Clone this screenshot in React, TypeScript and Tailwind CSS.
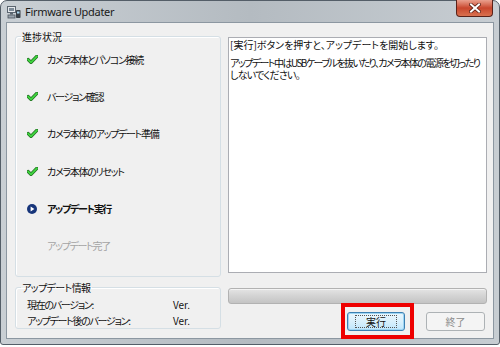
import React from 'react';

// 手順の状態
type StepStatus = 'done' | 'current' | 'pending';

const STEPS: { label: string; status: StepStatus }[] = [
  { label: 'カメラ本体とパソコン接続', status: 'done' },
  { label: 'バージョン確認', status: 'done' },
  { label: 'カメラ本体のアップデート準備', status: 'done' },
  { label: 'カメラ本体のリセット', status: 'done' },
  { label: 'アップデート実行', status: 'current' },
  { label: 'アップデート完了', status: 'pending' },
];

const jp = "font-['Noto_Sans_CJK_JP',sans-serif] [font-feature-settings:'palt']";

const CheckIcon = () => (
  <svg width="11" height="9" viewBox="0 0 11 9">
    <path d="M1.2 4.6 L4 7.4 L9.8 1.4" fill="none" stroke="#1f6b1f" strokeWidth="3.4" strokeLinecap="round" strokeLinejoin="round" />
    <path d="M1.2 4.6 L4 7.4 L9.8 1.4" fill="none" stroke="#3fd43f" strokeWidth="2" strokeLinecap="round" strokeLinejoin="round" />
  </svg>
);

const PlayIcon = () => (
  <svg width="10" height="10" viewBox="0 0 10 10">
    <circle cx="5" cy="5" r="5" fill="#17357a" />
    <path d="M3.6 2.6 L7.4 5 L3.6 7.4 Z" fill="#ffffff" />
  </svg>
);

const AppIcon = () => (
  <svg width="14" height="14" viewBox="0 0 14 14">
    <rect x="0.5" y="1.5" width="8" height="6" fill="#e6e9ec" stroke="#5b6570" />
    <rect x="2" y="3" width="5" height="3" fill="#7d8b98" />
    <rect x="3" y="8" width="3" height="1.5" fill="#5b6570" />
    <rect x="1" y="10" width="7" height="3" fill="#9aa4ae" stroke="#4b545d" strokeWidth="0.8" />
    <rect x="9" y="5" width="4.5" height="8" rx="0.8" fill="#3a4149" />
    <rect x="10" y="6.5" width="2.5" height="2" fill="#a9d6ef" />
  </svg>
);

const CloseGlyph = () => (
  <svg width="12" height="10" viewBox="0 0 12 10">
    <path d="M2 1.5 L10 8.5 M10 1.5 L2 8.5" stroke="#5a1e14" strokeWidth="3.6" strokeLinecap="square" />
    <path d="M2 1.5 L10 8.5 M10 1.5 L2 8.5" stroke="#ffffff" strokeWidth="2" strokeLinecap="square" />
  </svg>
);

export default function App() {
  return (
    <div className="w-[500px] h-[347px] bg-white">
      {/* ウィンドウ枠 */}
      <div className="w-[500px] h-[345px] flex flex-col rounded-t-[7px] rounded-b-[3px] border border-[#545e68] bg-gradient-to-r from-[#c9cfd4] via-[#b4bbc1] to-[#c7cdd2] px-[5px] pb-[5px]">
        {/* タイトルバー */}
        <div className="h-[21px] flex items-center relative">
          <div className="ml-[1px] mr-[4px] flex items-center">
            <AppIcon />
          </div>
          <span className="font-['Noto_Sans',sans-serif] text-[11px] tracking-[-0.3px] text-[#1a1a1a] leading-none">Firmware Updater</span>
          <div className="absolute right-[1px] -top-[1px] w-[37px] h-[17px] flex items-center justify-center rounded-b-[4px] border border-[#5a2219] border-t-0 bg-gradient-to-b from-[#e9a08e] via-[#c8462d] to-[#d9714f]">
            <CloseGlyph />
          </div>
        </div>

        {/* クライアント領域 */}
        <div className={`flex-1 flex border border-[#8c97a1] bg-[#f0f0f0] pl-[8px] pr-[6px] text-[10px] leading-[13px] text-[#111] ${jp}`}>
          {/* 左カラム */}
          <div className="w-[206px] shrink-0 flex flex-col pt-[7px]">
            <fieldset className="h-[247px] border border-[#d5dfe5] rounded-[3px] shadow-[inset_1px_1px_0_#fff]">
              <legend className="ml-[5px] px-[1px]">進捗状況</legend>
              <div className="flex flex-col gap-[24.4px] pt-[9.5px]">
                {STEPS.map((s) => (
                  <div key={s.label} className="h-[13px] flex items-center">
                    <div className="w-[31px] pl-[11px] flex items-center">
                      {s.status === 'done' && <CheckIcon />}
                      {s.status === 'current' && <PlayIcon />}
                    </div>
                    <span
                      className={
                        'tracking-[-1.3px] ' +
                        (s.status === 'current'
                          ? 'font-bold'
                          : s.status === 'pending'
                            ? 'text-[#a3a3a3]'
                            : '')
                      }
                    >
                      {s.label}
                    </span>
                  </div>
                ))}
              </div>
            </fieldset>

            <fieldset className="mt-[4px] h-[48px] border border-[#d5dfe5] rounded-[3px] shadow-[inset_1px_1px_0_#fff]">
              <legend className="ml-[5px] px-[1px] tracking-[-0.6px]">アップデート情報</legend>
              <div className="flex flex-col gap-[3px] pt-[4px] pl-[11px]">
                <div className="h-[13px] flex">
                  <span className="w-[146px] tracking-[-1.3px]">現在のバージョン:</span>
                  <span>Ver.</span>
                </div>
                <div className="h-[13px] flex">
                  <span className="w-[146px] tracking-[-1.3px]">アップデート後のバージョン:</span>
                  <span>Ver.</span>
                </div>
              </div>
            </fieldset>
          </div>

          {/* 右カラム */}
          <div className="flex-1 min-w-0 ml-[7px] flex flex-col pt-[14px]">
            <div className="h-[236px] border border-[#abadb3] bg-white px-[1px] pt-[1px] leading-[12px] text-[#111] whitespace-nowrap overflow-hidden">
              <p>[実行]ボタンを押すと、アップデートを開始します。</p>
              <p className="mt-[6px] tracking-[-1.55px]">アップデート中はUSBケーブルを抜いたり、カメラ本体の電源を切ったり</p>
              <p className="tracking-[-0.8px]">しないでください。</p>
            </div>

            <div className="mt-[15px] h-[16px] rounded-[3px] border border-[#b2b2b2] bg-gradient-to-b from-[#e4e4e4] via-[#d3d3d3] to-[#c4c4c4] shadow-[inset_0_1px_0_#f3f3f3]" />

            <div className="mt-[8px] flex justify-end gap-[21px] pr-[2px]">
              <div className="relative">
                <button
                  type="button"
                  className="w-[58px] h-[19px] rounded-[3px] border border-[#3c7fb1] bg-gradient-to-b from-[#eaf6fd] via-[#d9f0fc] to-[#bee6fd] shadow-[inset_0_0_0_1px_#9ed5f3] flex items-center justify-center text-[10px] text-[#111]"
                >
                  <span className="px-[10px] outline outline-1 outline-dotted outline-[#555] leading-[11px]">実行</span>
                </button>
                {/* 注釈の赤枠 */}
                <div className="absolute -left-[6px] -top-[9px] w-[73px] h-[36px] border-[4px] border-[#ee0000] pointer-events-none" />
              </div>
              <button
                type="button"
                disabled
                className="w-[59px] h-[19px] rounded-[3px] border border-[#adb2b5] bg-[#f4f4f4] text-[10px] text-[#8d8d8d] flex items-center justify-center"
              >
                終了
              </button>
            </div>
          </div>
        </div>
      </div>
    </div>
  );
}
